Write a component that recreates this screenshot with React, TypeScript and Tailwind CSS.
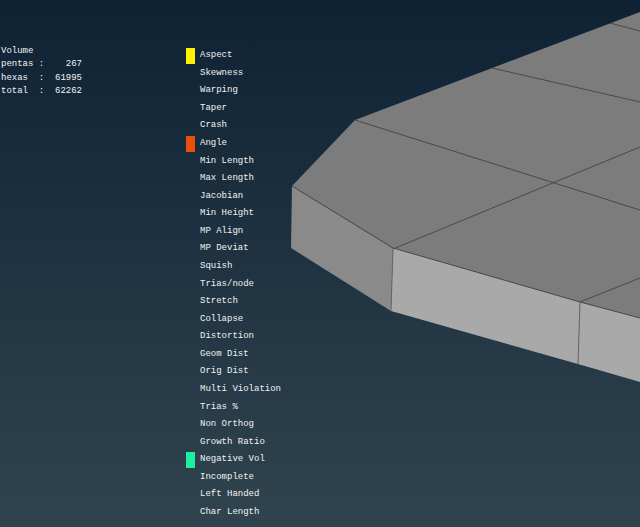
const metrics = [
  { name: 'Aspect', color: 'bg-[#fff200]' },
  { name: 'Skewness' },
  { name: 'Warping' },
  { name: 'Taper' },
  { name: 'Crash' },
  { name: 'Angle', color: 'bg-[#e8500a]' },
  { name: 'Min Length' },
  { name: 'Max Length' },
  { name: 'Jacobian' },
  { name: 'Min Height' },
  { name: 'MP Align' },
  { name: 'MP Deviat' },
  { name: 'Squish' },
  { name: 'Trias/node' },
  { name: 'Stretch' },
  { name: 'Collapse' },
  { name: 'Distortion' },
  { name: 'Geom Dist' },
  { name: 'Orig Dist' },
  { name: 'Multi Violation' },
  { name: 'Trias %' },
  { name: 'Non Orthog' },
  { name: 'Growth Ratio' },
  { name: 'Negative Vol', color: 'bg-[#1cf0a0]' },
  { name: 'Incomplete' },
  { name: 'Left Handed' },
  { name: 'Char Length' },
];

const volume = ['Volume', 'pentas :    267', 'hexas  :  61995', 'total  :  62262'];

function Mesh() {
  return (
    <svg className="absolute inset-0" width="640" height="527" viewBox="0 0 640 527">
      <polygon points="292,186 355,120 640,12 640,318 580,302 393,248" fill="#7c7c7c" />
      <polygon points="292,186 393,248 391,311 291,248" fill="#8a8a8a" />
      <polygon points="393,248 580,302 578,364 391,311" fill="#a9a9a9" />
      <polygon points="580,302 640,318 640,382 578,364" fill="#a9a9a9" />
      <g stroke="#3c3c3c" strokeWidth="0.8" fill="none">
        <path d="M355 120 L640 210" />
        <path d="M492 68 L640 102" />
        <path d="M610 23 L640 31" />
        <path d="M393 249 L640 147" />
        <path d="M580 302 L640 278" />
        <path d="M292 186 L393 248 L580 302 L640 318" />
      </g>
      <path d="M393 249 L391 311 M580 302 L578 364" stroke="#666666" strokeWidth="1" />
    </svg>
  );
}

export default function App() {
  return (
    <div className="relative h-[527px] w-[640px] overflow-hidden bg-gradient-to-b from-[#0e2234] to-[#30444f] font-['Liberation_Mono',monospace] text-[9px] text-[#f2f2f2]">
      <Mesh />
      <div className="relative flex">
        <div className="w-[186px] pl-[1px] pt-[45px]">
          {volume.map((line) => (
            <div key={line} className="h-[13.4px] whitespace-pre leading-[13.4px]">
              {line}
            </div>
          ))}
        </div>
        <ul className="pt-[47px]">
          {metrics.map((m) => (
            <li key={m.name} className="flex h-[17.58px] items-center">
              <span className={`h-[16px] w-[9px] ${m.color ?? ''}`} />
              <span className="ml-[5px] whitespace-pre">{m.name}</span>
            </li>
          ))}
        </ul>
      </div>
    </div>
  );
}
